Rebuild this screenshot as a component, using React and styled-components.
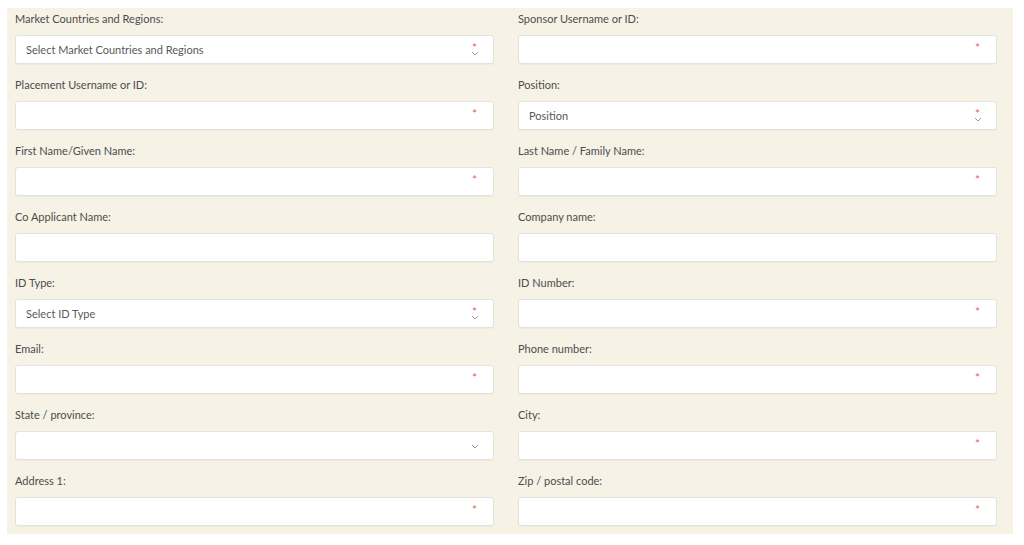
import React from 'react';
import styled, { createGlobalStyle } from 'styled-components';

const GlobalStyle = createGlobalStyle`
  html, body {
    margin: 0;
    padding: 0;
    background: #ffffff;
  }
  body {
    font-family: "Lato", "Liberation Sans", sans-serif;
  }
`;

const Page = styled.div`
  padding: 8px 11px 11px 7px;
`;

const Panel = styled.form`
  background: #f6f2e5;
  display: grid;
  grid-template-columns: 479px 479px;
  column-gap: 24px;
  row-gap: 12px;
  padding: 2px 16px 8px 8px;
`;

const Field = styled.div`
  display: flex;
  flex-direction: column;
`;

const Label = styled.label`
  font-size: 11px;
  line-height: 17px;
  color: #4d4d4d;
  margin-bottom: 8px;
  white-space: nowrap;
`;

const Box = styled.div`
  position: relative;
  height: 29px;
  box-sizing: border-box;
  background: #ffffff;
  border: 1px solid #e4e2dc;
  border-radius: 3px;
  box-shadow: 0 1px 1px rgba(0, 0, 0, 0.03);
  display: flex;
  align-items: center;
  padding: 0 10px;
  font-size: 11px;
  color: #5a5a5a;
`;

const Star = styled.span`
  position: absolute;
  right: 16px;
  top: 6px;
  color: #ec5f5f;
  font-size: 12px;
  line-height: 12px;
`;

const Chevron = styled.svg`
  position: absolute;
  right: 14px;
  top: ${p => (p.$required ? '15px' : '12px')};
  width: 8px;
  height: 5px;
`;

const fields = [
  { label: 'Market Countries and Regions:', value: 'Select Market Countries and Regions', select: true, required: true },
  { label: 'Sponsor Username or ID:', required: true },
  { label: 'Placement Username or ID:', required: true },
  { label: 'Position:', value: 'Position', select: true, required: true },
  { label: 'First Name/Given Name:', required: true },
  { label: 'Last Name / Family Name:', required: true },
  { label: 'Co Applicant Name:' },
  { label: 'Company name:' },
  { label: 'ID Type:', value: 'Select ID Type', select: true, required: true },
  { label: 'ID Number:', required: true },
  { label: 'Email:', required: true },
  { label: 'Phone number:', required: true },
  { label: 'State / province:', select: true },
  { label: 'City:', required: true },
  { label: 'Address 1:', required: true },
  { label: 'Zip / postal code:', required: true },
];

const InputBox = ({ value, select, required }) => (
  <Box>
    {value}
    {required && <Star>*</Star>}
    {select && (
      <Chevron $required={required} viewBox="0 0 8 5">
        <path d="M1 1 L4 4 L7 1" fill="none" stroke="#9a9a9a" strokeWidth="1" />
      </Chevron>
    )}
  </Box>
);

export default function App() {
  return (
    <>
      <GlobalStyle />
      <Page>
        <Panel>
          {fields.map(f => (
            <Field key={f.label}>
              <Label>{f.label}</Label>
              <InputBox value={f.value} select={f.select} required={f.required} />
            </Field>
          ))}
        </Panel>
      </Page>
    </>
  );
}
